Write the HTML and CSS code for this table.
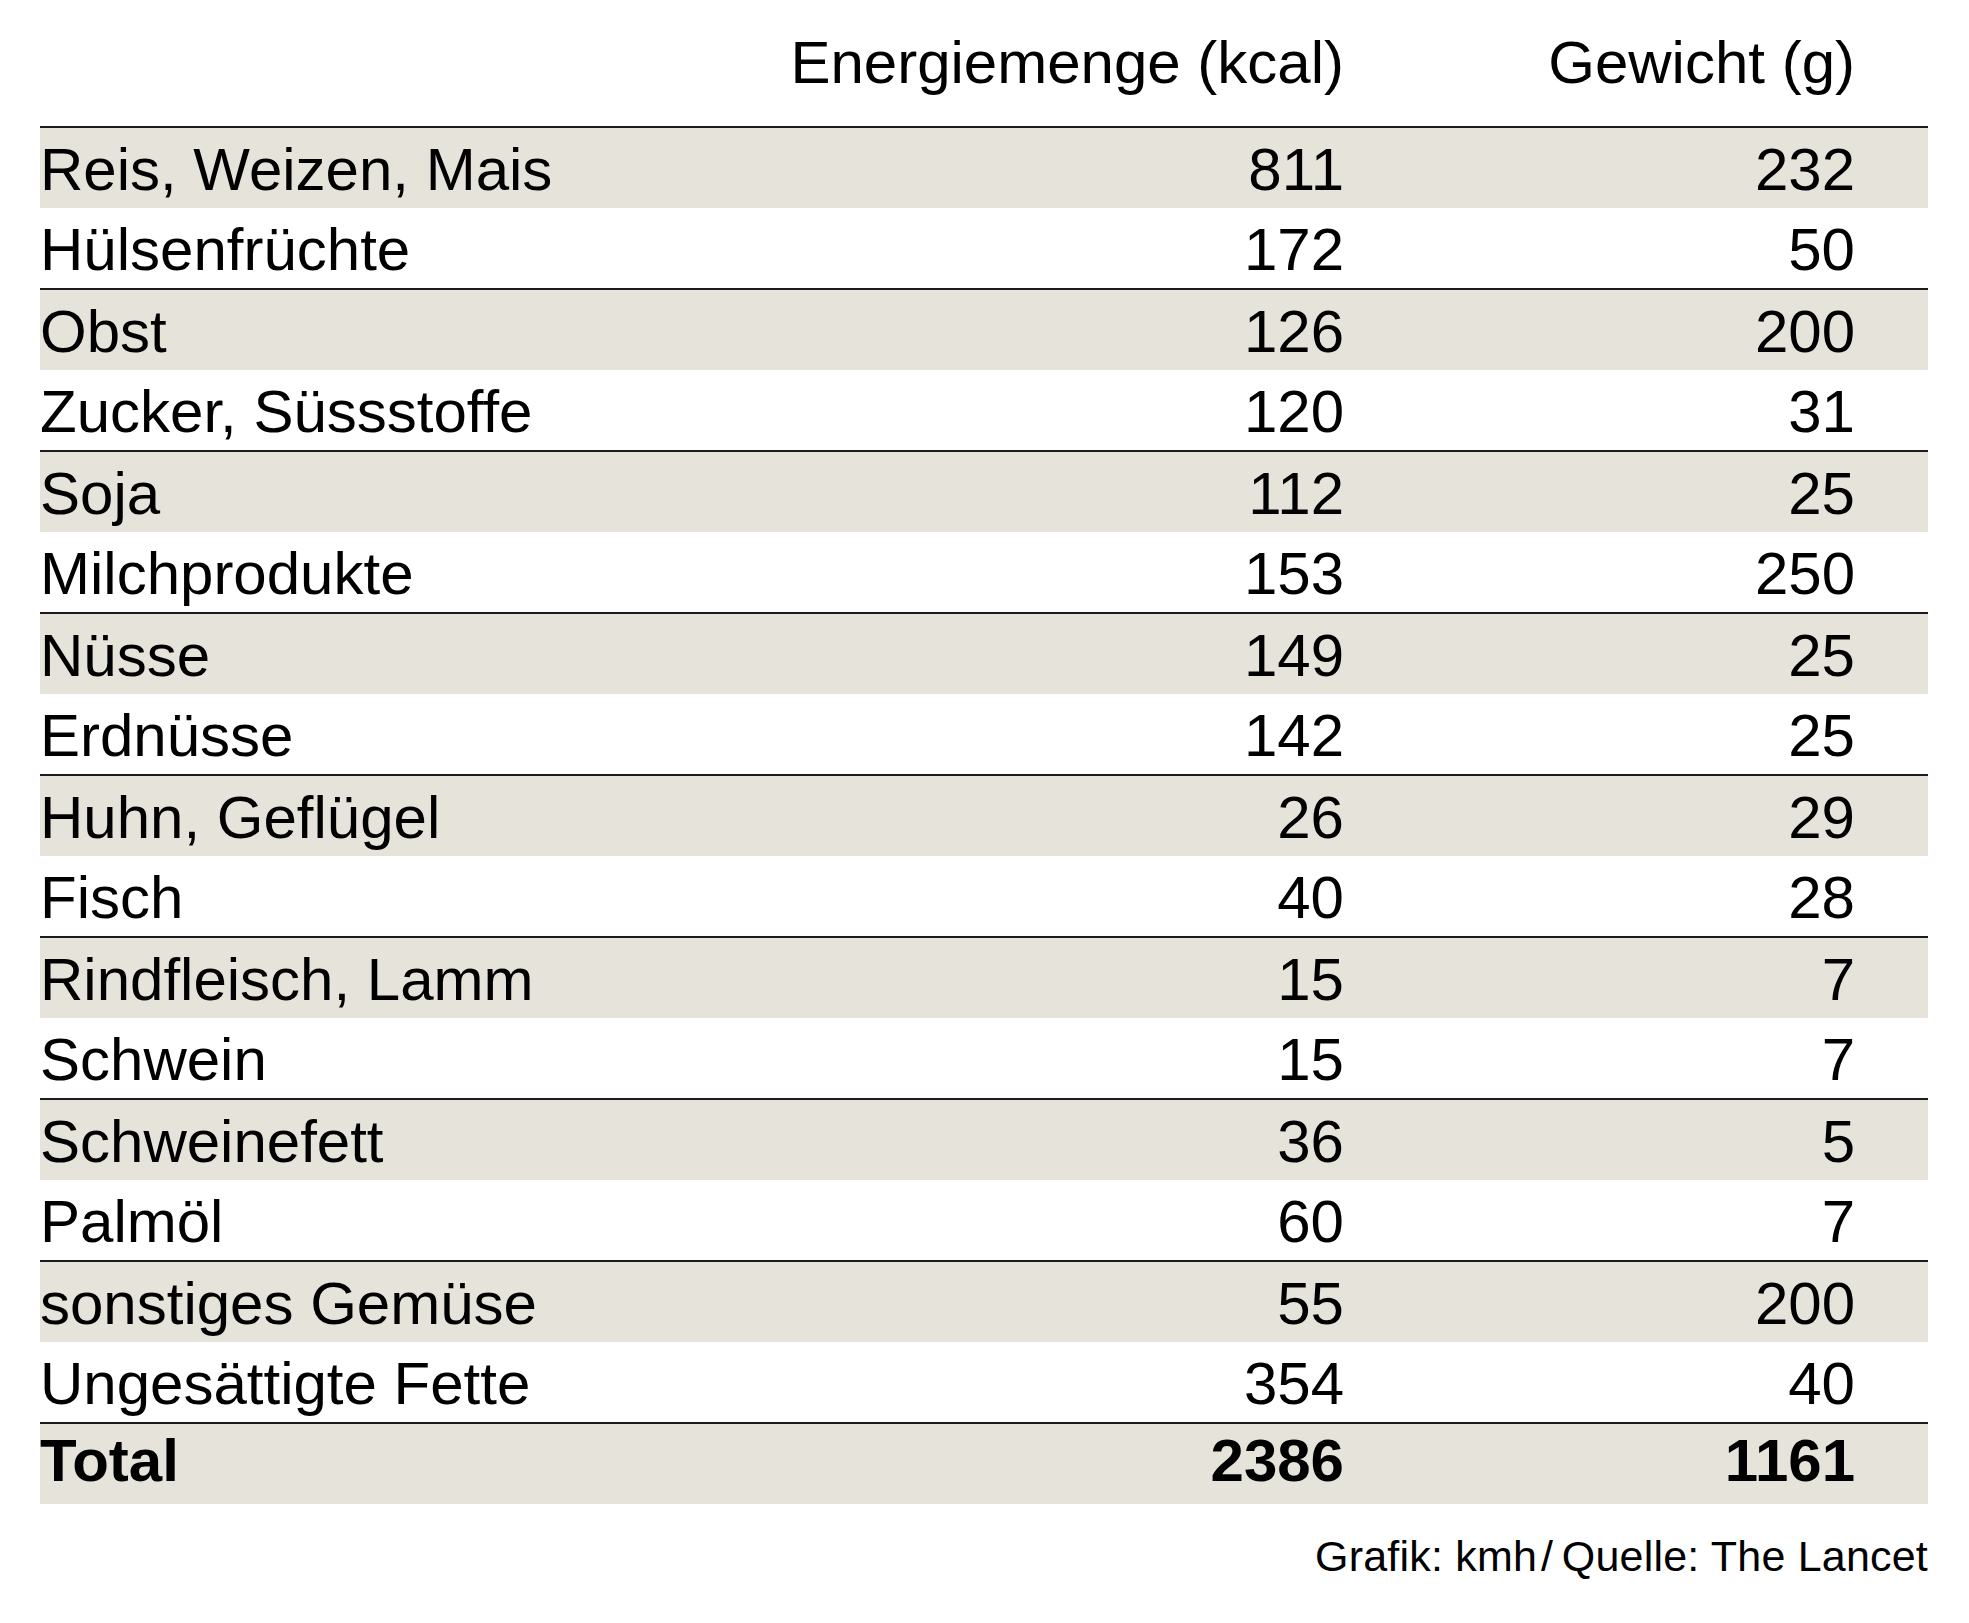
FILE: index.html
```html
<!DOCTYPE html>
<html lang="de">
<head>
<meta charset="utf-8">
<title>Energiemenge und Gewicht</title>
<link rel="stylesheet" href="styles.css">
</head>
<body>
<div class="sheet">
  <div class="row head">
    <div class="label"></div>
    <div class="num">Energiemenge (kcal)</div>
    <div class="num">Gewicht (g)</div>
  </div>
  <div class="row shade"><div class="label">Reis, Weizen, Mais</div><div class="num">811</div><div class="num">232</div></div>
  <div class="row"><div class="label">Hülsenfrüchte</div><div class="num">172</div><div class="num">50</div></div>
  <div class="row shade"><div class="label">Obst</div><div class="num">126</div><div class="num">200</div></div>
  <div class="row"><div class="label">Zucker, Süssstoffe</div><div class="num">120</div><div class="num">31</div></div>
  <div class="row shade"><div class="label">Soja</div><div class="num">112</div><div class="num">25</div></div>
  <div class="row"><div class="label">Milchprodukte</div><div class="num">153</div><div class="num">250</div></div>
  <div class="row shade"><div class="label">Nüsse</div><div class="num">149</div><div class="num">25</div></div>
  <div class="row"><div class="label">Erdnüsse</div><div class="num">142</div><div class="num">25</div></div>
  <div class="row shade"><div class="label">Huhn, Geflügel</div><div class="num">26</div><div class="num">29</div></div>
  <div class="row"><div class="label">Fisch</div><div class="num">40</div><div class="num">28</div></div>
  <div class="row shade"><div class="label">Rindfleisch, Lamm</div><div class="num">15</div><div class="num">7</div></div>
  <div class="row"><div class="label">Schwein</div><div class="num">15</div><div class="num">7</div></div>
  <div class="row shade"><div class="label">Schweinefett</div><div class="num">36</div><div class="num">5</div></div>
  <div class="row"><div class="label">Palmöl</div><div class="num">60</div><div class="num">7</div></div>
  <div class="row shade"><div class="label">sonstiges Gemüse</div><div class="num">55</div><div class="num">200</div></div>
  <div class="row"><div class="label">Ungesättigte Fette</div><div class="num">354</div><div class="num">40</div></div>
  <div class="row shade total"><div class="label">Total</div><div class="num">2386</div><div class="num">1161</div></div>
  <div class="source">Grafik: kmh&#8202;/&#8201;Quelle: The Lancet</div>
</div>
</body>
</html>
```
FILE: styles.css
```css
html, body {
  margin: 0;
  padding: 0;
  background: #ffffff;
}

body {
  font-family: "Liberation Sans", Arial, sans-serif;
  color: #000000;
}

.sheet {
  width: 1888px;
  margin-left: 40px;
}

.row {
  display: grid;
  grid-template-columns: 1fr 600px 511px;
  padding-right: 73px;
  height: 80px;
  box-sizing: border-box;
  padding-top: 7px;
  font-size: 60px;
  line-height: 70px;
  white-space: nowrap;
}

.row.head {
  height: 126px;
  padding-top: 28px;
}

.row.shade {
  background: #e6e3da;
  border-top: 2px solid #1c1c1c;
  height: 82px;
}

.row.total {
  font-weight: bold;
  padding-top: 2px;
}

.num {
  text-align: right;
}

.source {
  margin-top: 27px;
  text-align: right;
  font-size: 43px;
  line-height: 50px;
  letter-spacing: 0.2px;
}
```
